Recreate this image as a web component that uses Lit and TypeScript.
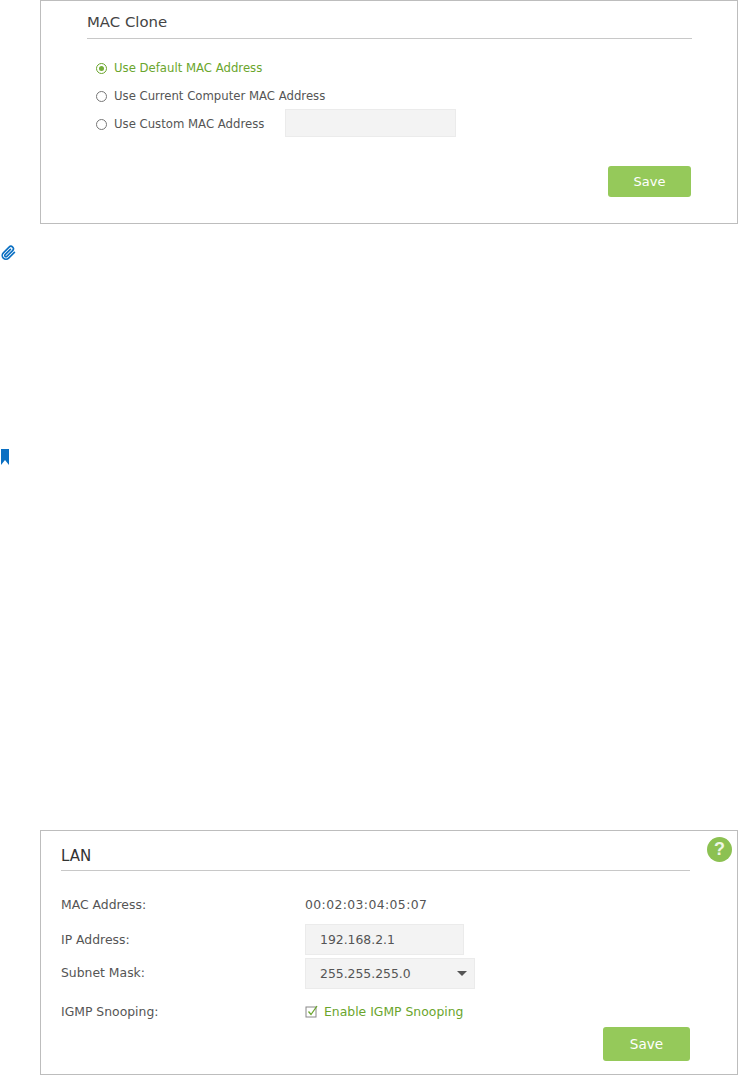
import { LitElement, html, css } from "lit";
import { customElement } from "lit/decorators.js";

@customElement("app-root")
export class AppRoot extends LitElement {
  static styles = css`
    :host { display: block; width: 738px; height: 1076px; background: #fff; font-family: "DejaVu Sans", Verdana, sans-serif; color: #555; overflow: hidden; font-size: 11.7px; }
    .page { display: flex; flex-direction: column; }
    .card { box-sizing: border-box; margin-left: 40px; border: 1px solid #bdbdbd; position: relative; }
    .mac { width: 698px; height: 224px; padding: 13px 45px 0 46px; }
    .lan { width: 698px; height: 245px; padding: 15px 47px 0 20px; margin-top: 365px; font-size: 12.4px; }
    .title { font-size: 14.9px; color: #444; height: 24px; line-height: 16px; border-bottom: 1px solid #c8c8c8; }
    .lan .title { height: 24px; font-size: 15px; line-height: 20px; color: #333; }
    .radios { display: flex; flex-direction: column; margin: 15px 0 0 9px; }
    .radio { display: flex; align-items: center; height: 28px; gap: 7px; white-space: nowrap; }
    .radio.on { color: #6aa52c; }
    .dot { box-sizing: border-box; width: 11px; height: 11px; border: 1px solid #777; border-radius: 50%; display: flex; align-items: center; justify-content: center; background: #fff; flex: none; }
    .on .dot { border-color: #6aa52c; }
    .on .dot::after { content: ""; width: 5px; height: 5px; border-radius: 50%; background: #74ad3a; }
    .field { background: #f3f3f3; border: 1px solid #ebebeb; box-sizing: border-box; }
    .custom { width: 171px; height: 28px; margin: 0 0 2px 14px; }
    .actions { display: flex; justify-content: flex-end; }
    .btn { background: #95c95a; color: #fff; border-radius: 3px; display: flex; align-items: center; justify-content: center; font-size: 13px; }
    .mac .actions { margin-top: 28px; }
    .mac .btn { width: 83px; height: 31px; margin-right: 1px; }
    .lan .btn { width: 87px; height: 34px; font-size: 13.6px; }
    .attach { margin: 21px 0 0 1px; height: 16px; }
    .mark { margin: 188px 0 0 1px; height: 16px; }
    svg { display: block; }
    .rows { display: grid; grid-template-columns: 244px 1fr; margin-top: 21px; }
    .cell { display: flex; align-items: center; }
    .h24 { height: 24px; }
    .ip-row { height: 31px; margin-top: 8px; }
    .sel-row { height: 31px; margin-top: 3px; }
    .sel-label { padding-bottom: 3px; box-sizing: border-box; }
    .cb-row { height: 16px; margin-top: 14px; }
    .mono { letter-spacing: 0.4px; }
    .ip { width: 159px; height: 31px; display: flex; align-items: center; padding-left: 14px; }
    .sel { width: 170px; height: 31px; display: flex; align-items: center; justify-content: space-between; padding: 0 7px 0 14px; }
    .arrow { width: 0; height: 0; border-left: 5px solid transparent; border-right: 5px solid transparent; border-top: 5px solid #555; }
    .cb { gap: 6px; color: #6aa52c; }
    .lan .actions { margin-top: 8px; }
    .help { position: absolute; top: 6px; right: 5px; width: 25px; height: 25px; border-radius: 50%; background: #8cc152; color: #eef6e4; font-family: "Liberation Sans", Arial, sans-serif; font-size: 18px; font-weight: bold; display: flex; align-items: center; justify-content: center; }
  `;

  render() {
    return html`
      <div class="page">
        <section class="card mac">
          <div class="title">MAC Clone</div>
          <div class="radios">
            <div class="radio on"><span class="dot"></span>Use Default MAC Address</div>
            <div class="radio"><span class="dot"></span>Use Current Computer MAC Address</div>
            <div class="radio"><span class="dot"></span>Use Custom MAC Address<div class="field custom"></div></div>
          </div>
          <div class="actions"><div class="btn">Save</div></div>
        </section>
        <div class="attach">
          <svg width="15" height="16" viewBox="0 0 24 24" fill="none" stroke="#0a6fc2" stroke-width="2.600" stroke-linecap="round" stroke-linejoin="round">
            <path d="M21.44 11.05l-9.19 9.19a6 6 0 0 1-8.49-8.49l9.19-9.19a4 4 0 0 1 5.66 5.66l-9.2 9.19a2 2 0 0 1-2.83-2.83l8.49-8.48"/>
          </svg>
        </div>
        <div class="mark">
          <svg width="8" height="16" viewBox="0 0 8 16"><path d="M0 0H8V16L4 11 0 16Z" fill="#0a6fc2"/></svg>
        </div>
        <section class="card lan">
          <div class="title">LAN</div>
          <span class="help">?</span>
          <div class="rows">
            <div class="cell h24">MAC Address:</div>
            <div class="cell h24 mono">00:02:03:04:05:07</div>
            <div class="cell ip-row">IP Address:</div>
            <div class="cell ip-row"><div class="field ip">192.168.2.1</div></div>
            <div class="cell sel-row sel-label">Subnet Mask:</div>
            <div class="cell sel-row"><div class="field sel">255.255.255.0<span class="arrow"></span></div></div>
            <div class="cell cb-row">IGMP Snooping:</div>
            <div class="cell cb-row cb">
              <svg width="13" height="13" viewBox="0 0 13 13" fill="none"><rect x="1" y="2" width="10" height="10" stroke="#888"/><path d="M3.500 6.500 6 9.500 12 1" stroke="#6aa52c" stroke-width="1.300"/></svg>
              Enable IGMP Snooping
            </div>
          </div>
          <div class="actions"><div class="btn">Save</div></div>
        </section>
      </div>
    `;
  }
}
